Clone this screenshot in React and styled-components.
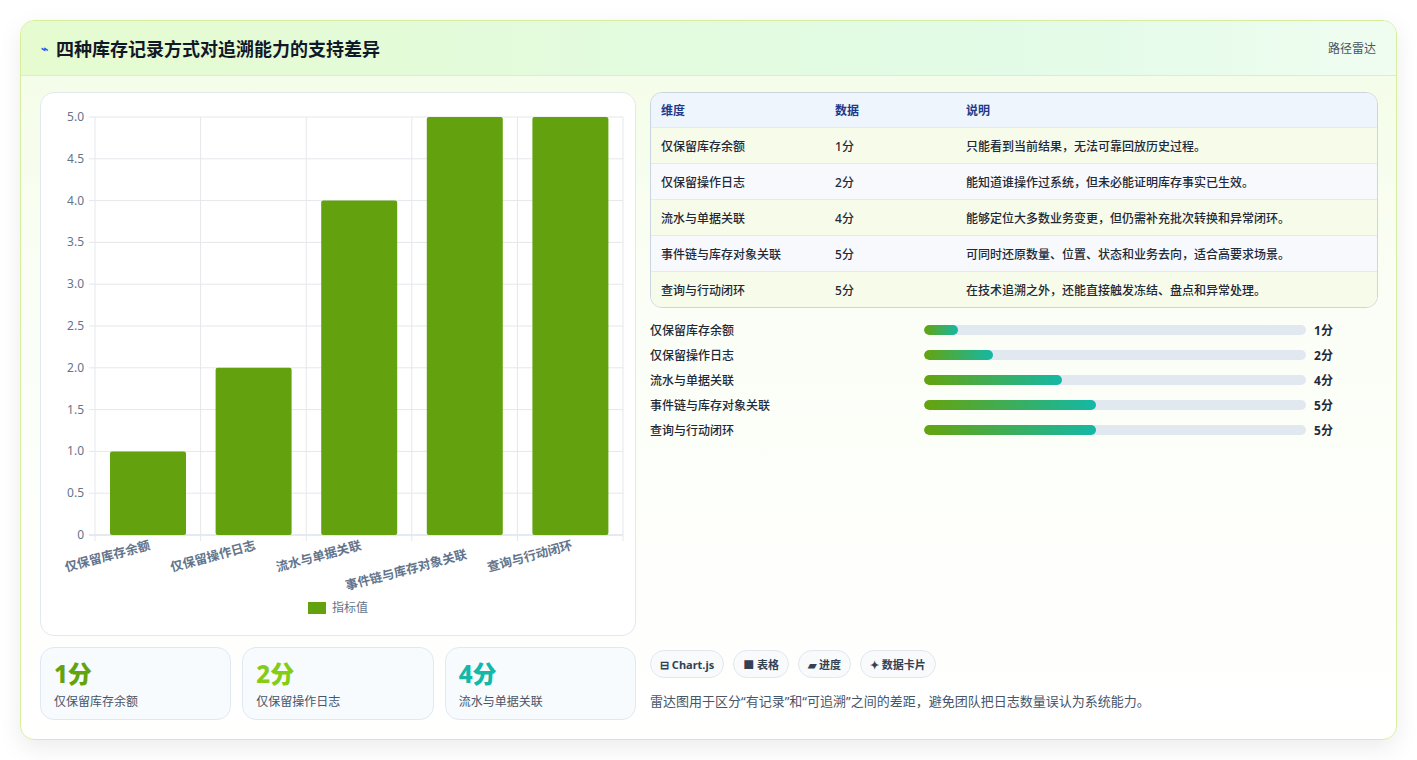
import React from "react";
import styled, { createGlobalStyle } from "styled-components";

const G = createGlobalStyle`
  body{margin:0;background:#fff;font-family:"Noto Sans","Noto Sans CJK SC",sans-serif;}
`;
const Page = styled.div`padding:20px 20px 20px 20px;width:1417px;box-sizing:border-box;`;
const Card = styled.div`
  width:1377px;height:720px;box-sizing:border-box;border:1px solid #d6ef9c;border-radius:14px;
  background:linear-gradient(180deg,#f3fde6 0%,#fbfef6 40%,#ffffff 100%);
  box-shadow:0 8px 24px rgba(0,0,0,.08);overflow:hidden;display:flex;flex-direction:column;
`;
const Header = styled.div`
  height:55px;flex:none;box-sizing:border-box;padding:0 20px;display:flex;align-items:center;justify-content:space-between;
  background:linear-gradient(90deg,#e6fbd0,#e1fbe6 70%,#effdf0);border-bottom:1px solid #dbeec6;
`;
const Title = styled.h1`margin:0;font-size:18px;font-weight:700;color:#111827;display:flex;align-items:center;gap:8px;`;
const Tag = styled.span`font-size:12px;color:#4b5563;`;
const Body = styled.div`flex:1;display:grid;grid-template-columns:596px 1fr;gap:14px;padding:16px 18px 18px 19px;`;
const Col = styled.div`display:flex;flex-direction:column;gap:11px;`;
const ChartCard = styled.div`height:544px;box-sizing:border-box;background:#fff;border:1px solid #e2e8f0;border-radius:14px;`;
const Stats = styled.div`display:grid;grid-template-columns:repeat(3,1fr);gap:11px;`;
const Stat = styled.div`height:73px;box-sizing:border-box;border:1px solid #dfe8f3;border-radius:14px;background:#f8fbfe;padding:10px 13px;`;
const Big = styled.div`font-size:24px;font-weight:800;color:${p=>p.c};line-height:32px;`;
const Small = styled.div`font-size:12px;color:#475569;margin-top:2px;`;
const Right = styled.div`display:flex;flex-direction:column;`;
const Table = styled.div`border:1px solid #cbd5e1;border-radius:12px;overflow:hidden;`;
const Row = styled.div`display:grid;grid-template-columns:174px 131px 1fr;height:${p=>p.h||35}px;align-items:center;padding-left:10px;font-size:12px;
  background:${p=>p.bg};border-top:${p=>p.first?"none":"1px solid #e5eaf0"};color:${p=>p.head?"#1e3a8a":"#1f2937"};font-weight:${p=>p.head?600:500};`;
const Bars = styled.div`display:flex;flex-direction:column;gap:7px;margin-top:13px;`;
const BarRow = styled.div`display:grid;grid-template-columns:274px 382px 1fr;align-items:center;height:18px;font-size:12px;color:#1f2937;font-weight:500;`;
const Track = styled.div`height:10px;background:#e2e8f0;border-radius:5px;overflow:hidden;`;
const Fill = styled.div`height:100%;border-radius:5px;background:linear-gradient(90deg,#65a30d,#14b8a6);`;
const Val = styled.span`padding-left:8px;font-weight:700;`;
const Spacer = styled.div`flex:1;`;
const Chips = styled.div`display:flex;gap:9px;`;
const Chip = styled.span`height:28px;box-sizing:border-box;padding:0 9px;border:1px solid #e2e8f0;border-radius:14px;background:#f8fafc;font-size:11px;font-weight:700;color:#334155;display:flex;align-items:center;gap:4px;`;
const Note = styled.p`margin:13px 0 11px;font-size:13px;color:#475569;`;

const cats = ["仅保留库存余额","仅保留操作日志","流水与单据关联","事件链与库存对象关联","查询与行动闭环"];
const vals = [1,2,4,5,5];
const descs = ["只能看到当前结果，无法可靠回放历史过程。","能知道谁操作过系统，但未必能证明库存事实已生效。","能够定位大多数业务变更，但仍需补充批次转换和异常闭环。","可同时还原数量、位置、状态和业务去向，适合高要求场景。","在技术追溯之外，还能直接触发冻结、盘点和异常处理。"];
const fills=[9,18,36,45,45];

function Chart(){
  const x0=54,x1=582,y0=442,yt=24,cw=(x1-x0)/5;
  const ys=v=>y0-v*(y0-yt)/5;
  const ticks=[0,.5,1,1.5,2,2.5,3,3.5,4,4.5,5];
  return <svg width="594" height="542" style={{display:"block"}} fontFamily='"Noto Sans","Noto Sans CJK SC",sans-serif'>
    {ticks.map(t=><g key={t}><line x1={x0-6} x2={x1} y1={ys(t)} y2={ys(t)} stroke={t===0?"#cbd5e1":"#e5e7eb"}/>
      <text x={x0-11} y={ys(t)+4} textAnchor="end" fontSize="12" fill="#64748b">{t===0?"0":t.toFixed(1)}</text></g>)}
    {[0,1,2,3,4,5].map(i=><line key={i} x1={x0+i*cw} x2={x0+i*cw} y1={yt} y2={y0+6} stroke="#e5e7eb"/>)}
    {vals.map((v,i)=><rect key={i} x={x0+i*cw+15} width={76} y={ys(v)} height={y0-ys(v)} rx="2" fill="#63a20e"/>)}
    {cats.map((c,i)=><text key={c} transform={`translate(${x0+(i+.5)*cw+3},${i===3?465:456}) rotate(-15)`} textAnchor="end" fontSize="12.5" fontWeight="600" fill="#64748b">{c}</text>)}
    <rect x="267" y="509" width="18" height="12" fill="#63a20e"/>
    <text x="291" y="519" fontSize="12" fill="#64748b">指标值</text>
  </svg>;
}

export default function App(){
  return <Page><G/><Card>
    <Header><Title><span style={{fontSize:12,color:"#2563eb"}}>⌁</span>四种库存记录方式对追溯能力的支持差异</Title><Tag>路径雷达</Tag></Header>
    <Body>
      <Col>
        <ChartCard><Chart/></ChartCard>
        <Stats>
          <Stat><Big c="#65a30d">1分</Big><Small>仅保留库存余额</Small></Stat>
          <Stat><Big c="#84cc16">2分</Big><Small>仅保留操作日志</Small></Stat>
          <Stat><Big c="#14b8a6">4分</Big><Small>流水与单据关联</Small></Stat>
        </Stats>
      </Col>
      <Right>
        <Table>
          <Row head first h={34} bg="#eef5fd"><span>维度</span><span>数据</span><span>说明</span></Row>
          {cats.map((c,i)=><Row key={c} bg={i%2?"#f7f9fc":"#f7fbea"}><span>{c}</span><span>{vals[i]}分</span><span>{descs[i]}</span></Row>)}
        </Table>
        <Bars>
          {cats.map((c,i)=><BarRow key={c}><span>{c}</span><Track><Fill style={{width:fills[i]+"%"}}/></Track><Val>{vals[i]}分</Val></BarRow>)}
        </Bars>
        <Spacer/>
        <Chips><Chip>⊟ Chart.js</Chip><Chip>■ 表格</Chip><Chip>▰ 进度</Chip><Chip>✦ 数据卡片</Chip></Chips>
        <Note>雷达图用于区分“有记录”和“可追溯”之间的差距，避免团队把日志数量误认为系统能力。</Note>
      </Right>
    </Body>
  </Card></Page>;
}
